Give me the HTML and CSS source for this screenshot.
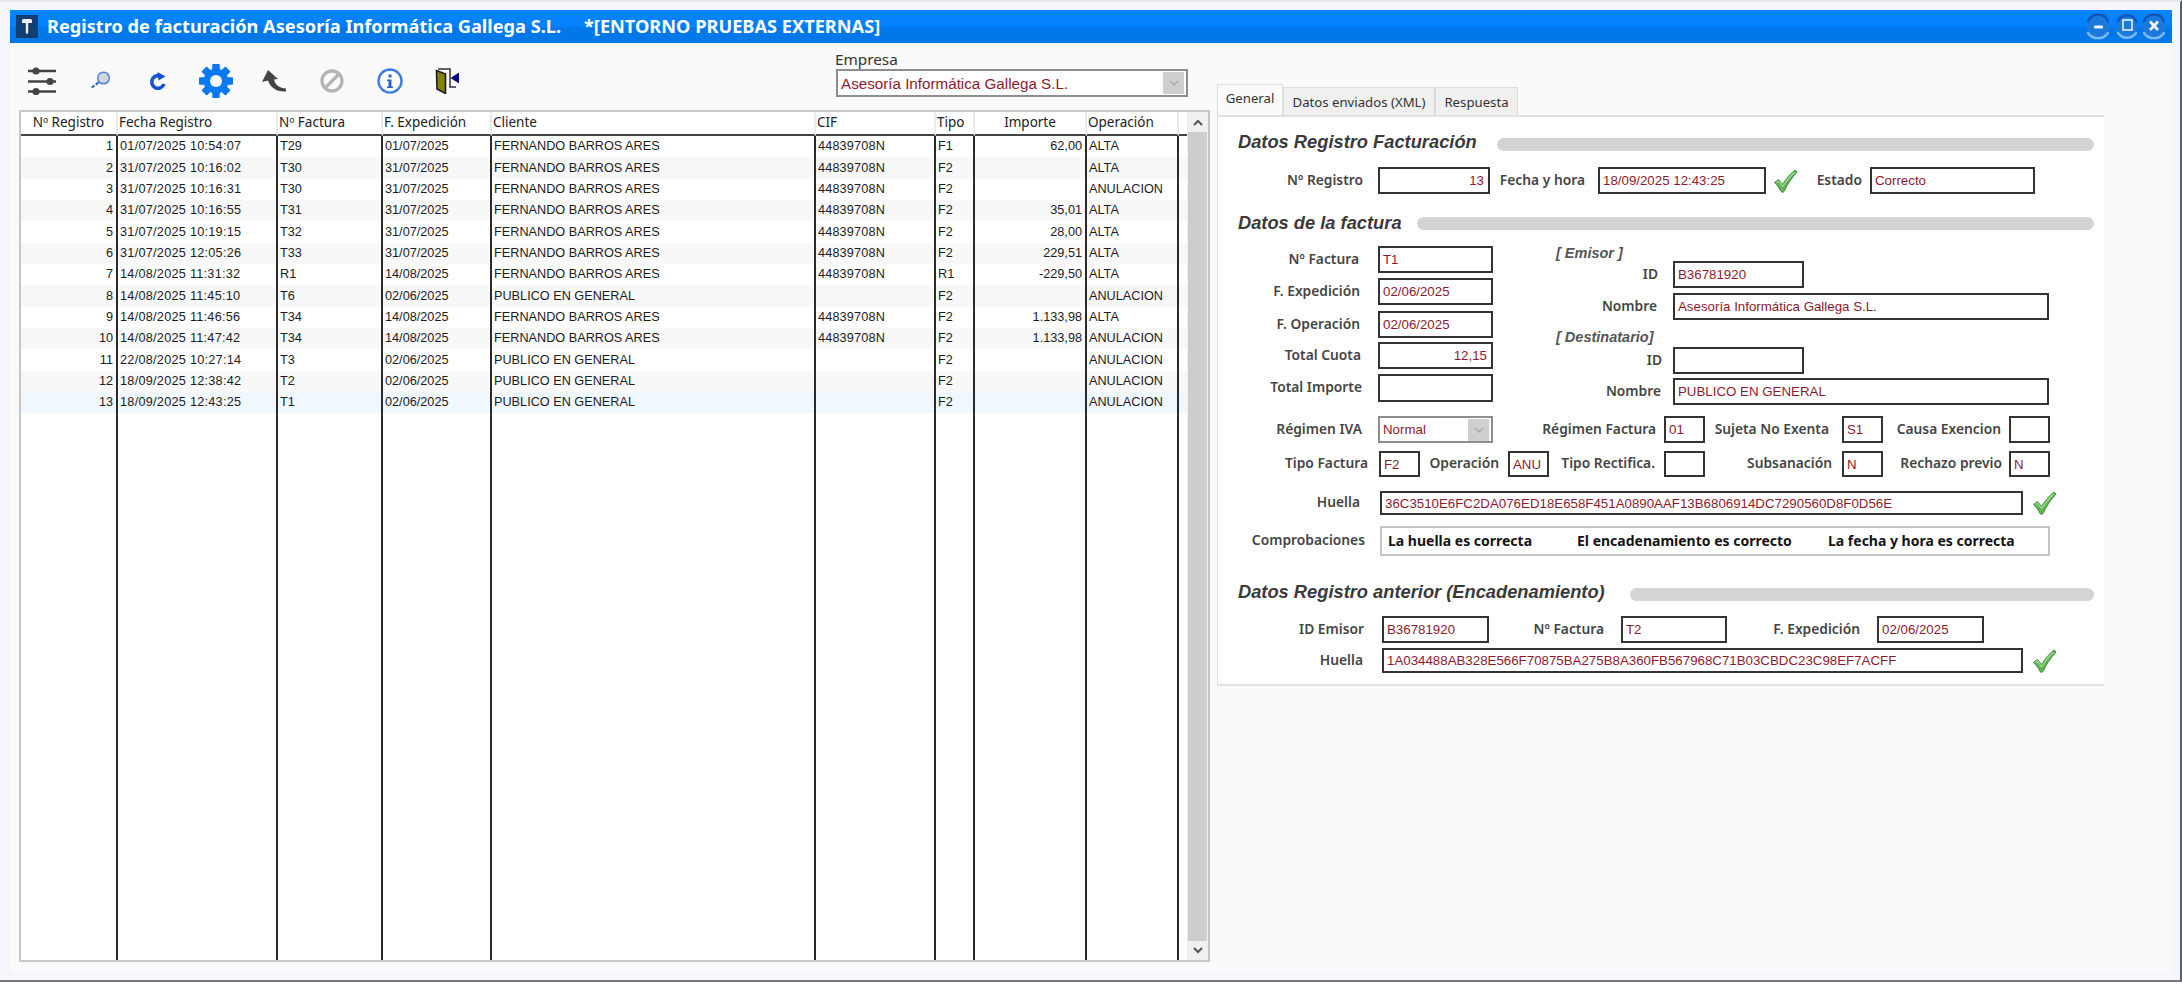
FILE: index.html
```html
<!DOCTYPE html>
<html lang="es">
<head>
<meta charset="utf-8">
<title>Registro de facturación</title>
<link rel="stylesheet" href="styles.css">
</head>
<body>
<svg class="defs" width="0" height="0" aria-hidden="true">
  <symbol id="tick" viewBox="0 0 25 24">
    <path d="M1.5 13.5 5.5 10.5 9.5 15.5C13 10 17 5 22 1l2 2C18.500 9 14 16 11 22.500 10.500 23.500 8.500 23.500 8 22.500 6.500 19 4 16 1.500 13.500Z" fill="#62b455" stroke="#3f8f3e" stroke-width="1"/>
    <path d="M3.500 13.500 5.500 12 9.500 17.500C13 12 17 7 21.500 3" fill="none" stroke="#a4dc97" stroke-width="1.200"/>
  </symbol>
</svg>
<div class="desk">
  <div class="win">
    <header class="titlebar">
      <svg class="app-icon" viewBox="0 0 22 23">
        <rect width="22" height="23" fill="#123f73"/>
        <path d="M6 5.500a1.500 1.500 0 0 1 1.500-1.500h7a1.500 1.500 0 0 1 1.500 1.500V8h-3.800v9.500a1.200 1.200 0 0 1-2.400 0V8H6Z" fill="#eef2f6"/>
      </svg>
      <span class="title-main">Registro de facturación Asesoría Informática Gallega S.L.</span>
      <span class="title-env">*[ENTORNO PRUEBAS EXTERNAS]</span>
      <svg class="win-btns" viewBox="0 0 82 28">
        <g fill="#1b78dc">
          <circle cx="13" cy="13" r="12"/><circle cx="42" cy="13" r="11"/><circle cx="69" cy="13" r="12"/>
        </g>
        <g fill="none" stroke-width="2.500" stroke-linecap="round">
          <path d="M3 20a12 12 0 0 0 20 0" stroke="#7dbaf5"/>
          <path d="M33 20a11 11 0 0 0 18 0" stroke="#7dbaf5"/>
          <path d="M59 20a12 12 0 0 0 20 0" stroke="#7dbaf5"/>
          <path d="M3 8a11 11 0 0 1 20 0" stroke="#0a56b8"/>
          <path d="M33 8a10 10 0 0 1 18 0" stroke="#0a56b8"/>
          <path d="M59 8a11 11 0 0 1 20 0" stroke="#0a56b8"/>
        </g>
        <rect x="9" y="12.500" width="9" height="3" rx="1" fill="#f4f8fc"/>
        <rect x="38" y="7" width="9" height="10" fill="none" stroke="#d4e4f4" stroke-width="1.800"/>
        <path d="M65 8.500 73 17M73 8.500 65 17" stroke="#f4f8fc" stroke-width="2.600"/>
      </svg>
    </header>
    <div class="body">
      <section class="left">
        <div class="toolbar">
          <div class="tools">
            <button class="tool"><svg width="28" height="28" viewBox="0 0 28 28"><g stroke="#444" stroke-width="2.400"><path d="M0 4h28M0 14.500h28M0 24.500h28"/></g><g fill="#444"><circle cx="8" cy="4" r="3.600"/><circle cx="22" cy="14.500" r="3.600"/><circle cx="8" cy="24.500" r="3.600"/></g></svg></button>
            <button class="tool"><svg width="22" height="20" viewBox="0 0 22 20"><circle cx="14.500" cy="7" r="5.800" fill="#d3d6de" stroke="#4a86dc" stroke-width="1.500"/><path d="M9.500 11.500 2 17" stroke="#2a5cb0" stroke-width="2" stroke-dasharray="3.500 1.500"/></svg></button>
            <button class="tool"><svg width="18" height="20" viewBox="0 0 18 20"><path d="M13.500 6.500A6.300 6.300 0 1 0 15 13" fill="none" stroke="#1551d8" stroke-width="3.600"/><path d="M8.500 1 16.500 5.500 9.500 9.500Z" fill="#1551d8"/></svg></button>
            <button class="tool"><svg width="34" height="34" viewBox="0 0 34 34"><g fill="#0b79f0"><rect x="13.200" y="0" width="7.600" height="34" rx="1"/><rect x="13.200" y="0" width="7.600" height="34" rx="1" transform="rotate(45 17 17)"/><rect x="13.200" y="0" width="7.600" height="34" rx="1" transform="rotate(90 17 17)"/><rect x="13.200" y="0" width="7.600" height="34" rx="1" transform="rotate(135 17 17)"/></g><circle cx="17" cy="17" r="9" fill="none" stroke="#0b79f0" stroke-width="7"/><circle cx="17" cy="17" r="6" fill="#fafafa"/></svg></button>
            <button class="tool"><svg width="26" height="23" viewBox="0 0 26 23"><path d="M7 0 1 12 7 10.500C9 17 15 22 25 21.500V18.500C19 18.500 14 15 13 9.500L17 9Z" fill="#444"/></svg></button>
            <button class="tool"><svg width="24" height="24" viewBox="0 0 24 24"><circle cx="12" cy="12" r="10" fill="none" stroke="#b4b4b4" stroke-width="3.300"/><path d="M6 18 18 6" stroke="#b4b4b4" stroke-width="3.300"/></svg></button>
            <button class="tool"><svg width="26" height="26" viewBox="0 0 26 26"><circle cx="13" cy="13" r="11.500" fill="#fff" stroke="#3f7ee2" stroke-width="2.400"/><path d="M11.500 6.500h3v3h-3ZM10 11.500h4.500v7H16v1.500h-6v-1.500h1.500v-5.500H10Z" fill="#2a62c8"/></svg></button>
            <button class="tool"><svg width="26" height="26" viewBox="0 0 26 26"><path d="M3 1h12v18h6" fill="none" stroke="#333" stroke-width="1.500"/><path d="M1.500 2.500 10.500 6v19.500L2 21Z" fill="#85820e" stroke="#1c1c1c" stroke-width="1.600"/><path d="M15.500 10 24 4.500v11Z" fill="#0a0a80"/></svg></button>
          </div>
          <div class="empresa">
            <div class="empresa-label">Empresa</div>
            <div class="combo combo-empresa">
              <span>Asesoría Informática Gallega S.L.</span>
              <span class="drop"><svg width="10" height="6" viewBox="0 0 10 6"><path d="M1 1l4 4 4-4" fill="none" stroke="#aaa" stroke-width="1.400"/></svg></span>
            </div>
          </div>
        </div>
        <div class="grid-frame">
          <table class="grid">
            <colgroup>
              <col class="c1"><col class="c2"><col class="c3"><col class="c4"><col class="c5"><col class="c6"><col class="c7"><col class="c8"><col class="c9"><col class="c10">
            </colgroup>
            <thead>
              <tr><th class="ctr">Nº Registro</th><th>Fecha Registro</th><th>Nº Factura</th><th>F. Expedición</th><th>Cliente</th><th>CIF</th><th>Tipo</th><th class="ctr">Importe</th><th>Operación</th><th></th></tr>
            </thead>
            <tbody>
              <tr><td class="num">1</td><td class="stamp">01/07/2025 10:54:07</td><td>T29</td><td>01/07/2025</td><td>FERNANDO BARROS ARES</td><td class="cif">44839708N</td><td>F1</td><td class="num">62,00</td><td>ALTA</td><td></td></tr>
              <tr><td class="num">2</td><td class="stamp">31/07/2025 10:16:02</td><td>T30</td><td>31/07/2025</td><td>FERNANDO BARROS ARES</td><td class="cif">44839708N</td><td>F2</td><td class="num"></td><td>ALTA</td><td></td></tr>
              <tr><td class="num">3</td><td class="stamp">31/07/2025 10:16:31</td><td>T30</td><td>31/07/2025</td><td>FERNANDO BARROS ARES</td><td class="cif">44839708N</td><td>F2</td><td class="num"></td><td>ANULACION</td><td></td></tr>
              <tr><td class="num">4</td><td class="stamp">31/07/2025 10:16:55</td><td>T31</td><td>31/07/2025</td><td>FERNANDO BARROS ARES</td><td class="cif">44839708N</td><td>F2</td><td class="num">35,01</td><td>ALTA</td><td></td></tr>
              <tr><td class="num">5</td><td class="stamp">31/07/2025 10:19:15</td><td>T32</td><td>31/07/2025</td><td>FERNANDO BARROS ARES</td><td class="cif">44839708N</td><td>F2</td><td class="num">28,00</td><td>ALTA</td><td></td></tr>
              <tr><td class="num">6</td><td class="stamp">31/07/2025 12:05:26</td><td>T33</td><td>31/07/2025</td><td>FERNANDO BARROS ARES</td><td class="cif">44839708N</td><td>F2</td><td class="num">229,51</td><td>ALTA</td><td></td></tr>
              <tr><td class="num">7</td><td class="stamp">14/08/2025 11:31:32</td><td>R1</td><td>14/08/2025</td><td>FERNANDO BARROS ARES</td><td class="cif">44839708N</td><td>R1</td><td class="num">-229,50</td><td>ALTA</td><td></td></tr>
              <tr><td class="num">8</td><td class="stamp">14/08/2025 11:45:10</td><td>T6</td><td>02/06/2025</td><td>PUBLICO EN GENERAL</td><td></td><td>F2</td><td class="num"></td><td>ANULACION</td><td></td></tr>
              <tr><td class="num">9</td><td class="stamp">14/08/2025 11:46:56</td><td>T34</td><td>14/08/2025</td><td>FERNANDO BARROS ARES</td><td class="cif">44839708N</td><td>F2</td><td class="num">1.133,98</td><td>ALTA</td><td></td></tr>
              <tr><td class="num">10</td><td class="stamp">14/08/2025 11:47:42</td><td>T34</td><td>14/08/2025</td><td>FERNANDO BARROS ARES</td><td class="cif">44839708N</td><td>F2</td><td class="num">1.133,98</td><td>ANULACION</td><td></td></tr>
              <tr><td class="num">11</td><td class="stamp">22/08/2025 10:27:14</td><td>T3</td><td>02/06/2025</td><td>PUBLICO EN GENERAL</td><td></td><td>F2</td><td class="num"></td><td>ANULACION</td><td></td></tr>
              <tr><td class="num">12</td><td class="stamp">18/09/2025 12:38:42</td><td>T2</td><td>02/06/2025</td><td>PUBLICO EN GENERAL</td><td></td><td>F2</td><td class="num"></td><td>ANULACION</td><td></td></tr>
              <tr class="current"><td class="num">13</td><td class="stamp">18/09/2025 12:43:25</td><td>T1</td><td>02/06/2025</td><td>PUBLICO EN GENERAL</td><td></td><td>F2</td><td class="num"></td><td>ANULACION</td><td></td></tr>
              <tr class="filler"><td></td><td></td><td></td><td></td><td></td><td></td><td></td><td></td><td></td><td></td></tr>
            </tbody>
          </table>
          <div class="vscroll">
            <div class="arrow arrow-up"><svg width="10" height="7" viewBox="0 0 10 7"><path d="M1 6 5 2l4 4" fill="none" stroke="#555" stroke-width="2"/></svg></div>
            <div class="thumb"></div>
            <div class="arrow arrow-down"><svg width="10" height="7" viewBox="0 0 10 7"><path d="M1 1l4 4 4-4" fill="none" stroke="#555" stroke-width="2"/></svg></div>
          </div>
        </div>
      </section>

      <section class="right">
        <nav class="tabs">
          <div class="tab tab-on w66">General</div>
          <div class="tab w152">Datos enviados (XML)</div>
          <div class="tab w83">Respuesta</div>
        </nav>
        <div class="panel">
          <div class="sec-head sh1"><h2 class="h-a">Datos Registro Facturación</h2><div class="bar"></div></div>
          <div class="row r-reg">
            <label class="lbl w145">Nº Registro</label><div class="fld ml15 w112 right">13</div>
            <label class="lbl w95">Fecha y hora</label><div class="fld ml13 w168">18/09/2025 12:43:25</div>
            <svg class="tick ml7"><use href="#tick"/></svg>
            <label class="lbl w64">Estado</label><div class="fld ml8 w165">Correcto</div>
          </div>

          <div class="sec-head sh2"><h2 class="h-b">Datos de la factura</h2><div class="bar"></div></div>
          <div class="fac-top">
            <div class="fac-left">
              <div class="row"><label class="lbl w141">Nº Factura</label><div class="fld ml19 w115">T1</div></div>
              <div class="row mt5"><label class="lbl w142">F. Expedición</label><div class="fld ml18 w115">02/06/2025</div></div>
              <div class="row mt6"><label class="lbl w142">F. Operación</label><div class="fld ml18 w115">02/06/2025</div></div>
              <div class="row mt4"><label class="lbl w143">Total Cuota</label><div class="fld ml17 w115 right">12,15</div></div>
              <div class="row mt5"><label class="lbl w144">Total Importe</label><div class="fld ml16 w115"></div></div>
            </div>
            <div class="fac-right">
              <div class="party">[ Emisor ]</div>
              <div class="row"><label class="lbl w102">ID</label><div class="fld ml15 w131">B36781920</div></div>
              <div class="row mt5"><label class="lbl w101">Nombre</label><div class="fld ml16 w376">Asesoría Informática Gallega S.L.</div></div>
              <div class="party party2">[ Destinatario]</div>
              <div class="row"><label class="lbl w106">ID</label><div class="fld ml11 w131"></div></div>
              <div class="row mt4"><label class="lbl w105">Nombre</label><div class="fld ml12 w376">PUBLICO EN GENERAL</div></div>
            </div>
          </div>
          <div class="row r-reg2">
            <label class="lbl w144">Régimen IVA</label>
            <div class="combo combo-iva ml16 w115"><span>Normal</span><span class="drop"><svg width="10" height="6" viewBox="0 0 10 6"><path d="M1 1l4 4 4-4" fill="none" stroke="#aaa" stroke-width="1.400"/></svg></span></div>
            <label class="lbl w163">Régimen Factura</label><div class="fld ml8 w41">01</div>
            <label class="lbl w124">Sujeta No Exenta</label><div class="fld ml13 w41">S1</div>
            <label class="lbl w118">Causa Exencion</label><div class="fld ml8 w41"></div>
          </div>
          <div class="row r-tipo">
            <label class="lbl w150">Tipo Factura</label><div class="fld ml11 w41">F2</div>
            <label class="lbl w79">Operación</label><div class="fld ml9 w41">ANU</div>
            <label class="lbl w106">Tipo Rectifica.</label><div class="fld ml9 w41"></div>
            <label class="lbl w127">Subsanación</label><div class="fld ml10 w41">N</div>
            <label class="lbl w119">Rechazo previo</label><div class="fld ml7 w41">N</div>
          </div>
          <div class="row r-huella">
            <label class="lbl w142">Huella</label><div class="fld ml20 w643">36C3510E6FC2DA076ED18E658F451A0890AAF13B6806914DC7290560D8F0D56E</div>
            <svg class="tick ml9"><use href="#tick"/></svg>
          </div>
          <div class="row r-comp">
            <label class="lbl w147">Comprobaciones</label>
            <div class="checks ml15">
              <span class="chk chk1">La huella es correcta</span>
              <span class="chk chk2">El encadenamiento es correcto</span>
              <span class="chk">La fecha y hora es correcta</span>
            </div>
          </div>

          <div class="sec-head sh3"><h2 class="h-c">Datos Registro anterior (Encadenamiento)</h2><div class="bar"></div></div>
          <div class="row r-prev">
            <label class="lbl w146">ID Emisor</label><div class="fld ml18 w107">B36781920</div>
            <label class="lbl w115">Nº Factura</label><div class="fld ml17 w106">T2</div>
            <label class="lbl w133">F. Expedición</label><div class="fld ml17 w107">02/06/2025</div>
          </div>
          <div class="row r-prev2">
            <label class="lbl w145">Huella</label><div class="fld ml19 w641">1A034488AB328E566F70875BA275B8A360FB567968C71B03CBDC23C98EF7ACFF</div>
            <svg class="tick ml9"><use href="#tick"/></svg>
          </div>
        </div>
      </section>
    </div>
  </div>
</div>
</body>
</html>
```
FILE: styles.css
```css
* { box-sizing: border-box; }
html, body { margin: 0; padding: 0; background: #fff; }
body { width: 2182px; height: 984px; overflow: hidden; font-family: "Liberation Sans", Arial, sans-serif; }
.defs { position: absolute; }

.desk {
  width: 2182px; height: 982px;
  background: #f4f6fb;
  border-top: 2px solid #e4e6ea;
  border-right: 2px solid #5c6066;
  border-bottom: 2px solid #74777c;
  padding: 8px 8px 7px 10px;
}
.win { height: 963px; display: flex; flex-direction: column; background: #fafafa; }

.titlebar {
  height: 33px; flex: none;
  display: flex; align-items: center;
  background: linear-gradient(#0a84ff 0, #0080ff 52%, #0078ea 52%, #0078ea 100%);
  color: #fff;
  font: 700 18.200px/1 "Noto Sans", sans-serif;
  padding-left: 6px;
}
.app-icon { width: 22px; height: 23px; flex: none; }
.title-main { width: 537px; margin-left: 9px; white-space: nowrap; }
.title-env { white-space: nowrap; }
.win-btns { width: 82px; height: 28px; margin-left: auto; margin-right: 5px; flex: none; }

.body { flex: 1; display: flex; min-height: 0; }
.left { width: 1200px; flex: none; }
.toolbar { height: 67px; display: flex; padding-right: 22px; }
.tools { display: flex; align-items: center; padding: 9px 0 0 3px; }
.tool { width: 58px; height: 40px; padding: 0; border: 0; background: none; display: flex; align-items: center; justify-content: center; }
.tool svg { display: block; }
.empresa { margin-left: auto; width: 352px; padding-top: 7px; }
.empresa-label { height: 19px; font: 15.300px/18px "Noto Sans", sans-serif; color: #333; margin-left: -1px; }

.combo {
  display: flex; align-items: center; justify-content: space-between;
  background: #fff; border: 2px solid #8e8e8e;
  color: #8d1a2c; font-size: 13.300px; padding: 0 2px 0 3px;
}
.combo-empresa { height: 28px; font-size: 15.200px; }
.combo-iva { height: 27px; padding-left: 3px; }
.drop { width: 21px; height: 22px; background: #cfcfcf; display: flex; align-items: center; justify-content: center; flex: none; }

.grid-frame {
  margin-left: 9px; width: 1191px; height: 852px;
  border: 2px solid #c6c6c6; background: #fff;
  display: flex;
}
.grid { width: 1166px; height: 848px; flex: none; table-layout: fixed; border-collapse: separate; border-spacing: 0; font-size: 12.700px; color: #1c1c1c; }
.c1 { width: 97px; } .c2 { width: 160px; } .c3 { width: 105px; } .c4 { width: 109px; } .c5 { width: 324px; }
.c6 { width: 120px; } .c7 { width: 39px; } .c8 { width: 112px; } .c9 { width: 92px; } .c10 { width: 8px; }
.grid th {
  height: 24px; padding: 0 1px; text-align: left;
  font: 400 13.500px/1 "Noto Sans", sans-serif; color: #222;
  border-right: 2px solid #eaeaea; border-bottom: 2px solid #444;
  white-space: nowrap; background: #fff;
}
.grid th.ctr { text-align: center; }
.grid th:last-child, .grid td:last-child { border-right: 0; }
.grid td {
  height: 21.300px; padding: 0 2px; line-height: 1;
  border-right: 2px solid #2a2a2a; white-space: nowrap; overflow: hidden;
}
.grid td.num { text-align: right; padding-right: 3px; }
.grid td.stamp { letter-spacing: .26px; }
.grid td.cif { letter-spacing: .15px; }
.grid tbody tr:nth-child(even) td { background: #f8f8f8; }
.grid tbody tr.current td { background: #f0f7fd; }
.grid tbody tr.filler td { height: 545px; background: #fff; }

.vscroll { width: 21px; flex: none; display: flex; flex-direction: column; background: #f0f0f0; padding: 0 1px 0 1px; }
.arrow { flex: none; display: flex; align-items: center; justify-content: center; }
.arrow-up { height: 20px; }
.arrow-down { height: 19px; }
.thumb { flex: 1; background: #cdcdcd; }

.right { margin-left: 7px; width: 887px; padding-top: 41px; flex: none; }
.tabs { display: flex; align-items: flex-end; height: 31px; }
.tab {
  height: 28px; background: #f0f0f0;
  border: 1px solid #dedede; border-bottom: 0;
  font: 13.200px/28px "Noto Sans", sans-serif; color: #333;
  text-align: center; white-space: nowrap;
}
.tab-on { height: 31px; background: #fafafa; line-height: 26px; }
.panel {
  background: #fff; border: 0 solid #e2e2e2;
  border-width: 2px 0 2px 1px;
  height: 571px;
}

.sec-head { display: flex; align-items: center; padding: 0 10px 0 20px; height: 20px; }
.sec-head h2 { margin: 0; flex: none; font: italic 700 18.300px/20px "Liberation Sans", sans-serif; color: #3a3a3a; white-space: nowrap; }
.bar { flex: 1; height: 13px; border-radius: 7px; background: #d4d4d4; position: relative; top: 2px; }
.h-a { width: 259px; } .h-b { width: 179px; } .h-c { width: 392px; }
.sh1 { margin-top: 15px; }
.sh2 { margin-top: 19px; }
.sh2 .bar { top: 0; }
.sh3 { margin-top: 26px; }

.row { display: flex; align-items: center; }
.lbl { flex: none; text-align: right; white-space: nowrap; font: 600 13.800px/1 "Noto Sans", sans-serif; color: #454545; margin-bottom: 2px; }
.fld {
  flex: none; height: 27px; background: #fff; border: 2px solid #333;
  display: flex; align-items: center; padding: 0 3px;
  color: #8d1a2c; font-size: 13.300px; white-space: nowrap; overflow: hidden;
}
.fld.right { justify-content: flex-end; padding-right: 4px; }
.tick { width: 25px; height: 24px; flex: none; }

.r-reg { margin-top: 15px; }
.fac-top { display: flex; margin-top: 13px; }
.fac-left { width: 275px; flex: none; }
.fac-left .row:last-child .fld { height: 28px; }
.fac-right { margin-left: 63px; flex: none; }
.party { height: 15px; font: italic 700 14.500px/15px "Liberation Sans", sans-serif; color: #555; }
.party2 { height: 16px; margin: 9px 0 2px; line-height: 16px; }
.r-reg2 { margin-top: 11px; }
.r-tipo { margin-top: 8px; }
.r-tipo .fld { height: 26px; }
.r-huella { margin-top: 14px; }
.r-huella .fld { height: 24px; }
.r-comp { margin-top: 11px; }
.checks {
  flex: none; width: 670px; height: 30px; display: flex; align-items: center;
  padding-left: 6px; border: 2px solid #c4c4c4; background: #fff;
  font: 700 14px/1 "Noto Sans", sans-serif; color: #141414; white-space: nowrap;
}
.chk1 { width: 189px; } .chk2 { width: 251px; }
.r-prev { margin-top: 14px; }
.r-prev2 { margin-top: 5px; }
.r-prev2 .fld { height: 25px; }

.mt4 { margin-top: 4px; } .mt5 { margin-top: 5px; } .mt6 { margin-top: 6px; }
.ml7 { margin-left: 7px; } .ml8 { margin-left: 8px; } .ml9 { margin-left: 9px; } .ml10 { margin-left: 10px; }
.ml11 { margin-left: 11px; } .ml12 { margin-left: 12px; } .ml13 { margin-left: 13px; } .ml15 { margin-left: 15px; }
.ml16 { margin-left: 16px; } .ml17 { margin-left: 17px; } .ml18 { margin-left: 18px; } .ml19 { margin-left: 19px; } .ml20 { margin-left: 20px; }
.w41 { width: 41px; } .w64 { width: 64px; } .w66 { width: 66px; } .w79 { width: 79px; } .w83 { width: 83px; } .w95 { width: 95px; }
.w101 { width: 101px; } .w102 { width: 102px; } .w105 { width: 105px; } .w106 { width: 106px; } .w107 { width: 107px; }
.w112 { width: 112px; } .w115 { width: 115px; } .w118 { width: 118px; } .w119 { width: 119px; } .w124 { width: 124px; }
.w127 { width: 127px; } .w131 { width: 131px; } .w133 { width: 133px; } .w141 { width: 141px; } .w142 { width: 142px; }
.w143 { width: 143px; } .w144 { width: 144px; } .w145 { width: 145px; } .w146 { width: 146px; } .w147 { width: 147px; }
.w150 { width: 150px; } .w152 { width: 152px; } .w163 { width: 163px; } .w165 { width: 165px; } .w168 { width: 168px; }
.w376 { width: 376px; } .w641 { width: 641px; } .w643 { width: 643px; }
```
